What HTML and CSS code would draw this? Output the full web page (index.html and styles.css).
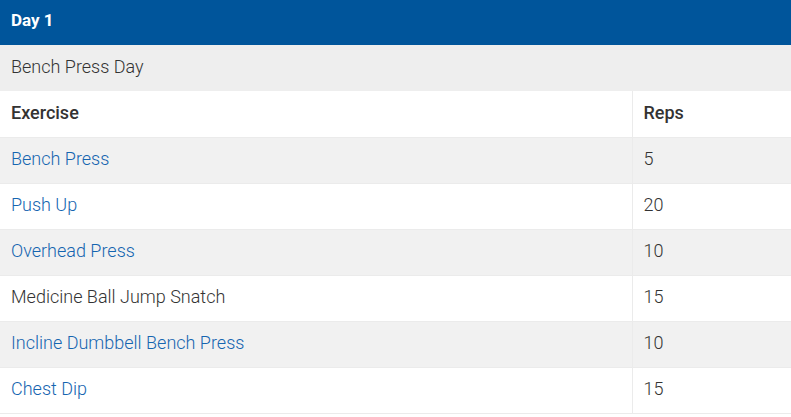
FILE: index.html
```html
<!DOCTYPE html>
<html>
<head>
<meta charset="utf-8">
<link rel="stylesheet" href="styles.css">
</head>
<body>
<div class="day">
  <div class="day-title">Day 1</div>
  <div class="day-sub">Bench Press Day</div>
  <table class="ex-table">
    <thead>
      <tr><th class="col-ex">Exercise</th><th>Reps</th></tr>
    </thead>
    <tbody>
      <tr><td><a href="#">Bench Press</a></td><td>5</td></tr>
      <tr><td><a href="#">Push Up</a></td><td>20</td></tr>
      <tr><td><a href="#">Overhead Press</a></td><td>10</td></tr>
      <tr><td>Medicine Ball Jump Snatch</td><td>15</td></tr>
      <tr><td><a href="#">Incline Dumbbell Bench Press</a></td><td>10</td></tr>
      <tr><td><a href="#">Chest Dip</a></td><td>15</td></tr>
    </tbody>
  </table>
</div>
</body>
</html>
```
FILE: styles.css
```css
html, body {
  margin: 0;
  padding: 0;
  background: #fff;
}
body {
  font-family: Roboto, "Liberation Sans", sans-serif;
  font-size: 18px;
  font-weight: 300;
  color: #333;
}
.day-title {
  background: #00559b;
  color: #fff;
  font-weight: 700;
  font-size: 17px;
  height: 45px;
  line-height: 41px;
  padding: 0 11px;
  box-sizing: border-box;
}
.day-sub {
  background: #eeeeee;
  height: 46px;
  line-height: 43px;
  padding: 0 11px;
  box-sizing: border-box;
}
.ex-table {
  width: 100%;
  border-collapse: collapse;
}
.ex-table th, .ex-table td {
  height: 46px;
  padding: 0 10px 3px 11px;
  text-align: left;
  border-bottom: 1px solid #ebebeb;
  box-sizing: border-box;
  vertical-align: middle;
}
.ex-table th {
  font-weight: 500;
  background: #fff;
}
.ex-table th + th, .ex-table td + td {
  border-left: 1px solid #ebebeb;
}
.ex-table .col-ex {
  width: 632px;
}
.ex-table tbody tr:nth-child(odd) {
  background: #f1f1f1;
}
.ex-table a {
  color: #1565b0;
  text-decoration: none;
}
```
